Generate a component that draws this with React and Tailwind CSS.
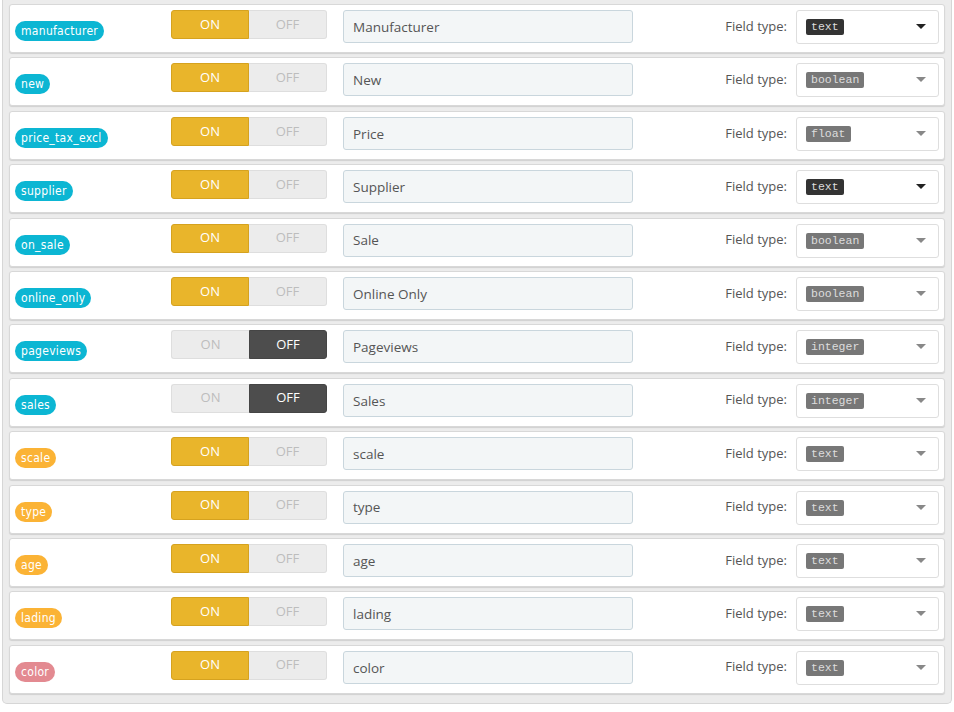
import React from "react";

const fields = [
  { key: "manufacturer", label: "Manufacturer", on: true, type: "text", active: true, tone: "info" },
  { key: "new", label: "New", on: true, type: "boolean", tone: "info" },
  { key: "price_tax_excl", label: "Price", on: true, type: "float", tone: "info" },
  { key: "supplier", label: "Supplier", on: true, type: "text", active: true, tone: "info" },
  { key: "on_sale", label: "Sale", on: true, type: "boolean", tone: "info" },
  { key: "online_only", label: "Online Only", on: true, type: "boolean", tone: "info" },
  { key: "pageviews", label: "Pageviews", on: false, type: "integer", tone: "info" },
  { key: "sales", label: "Sales", on: false, type: "integer", tone: "info" },
  { key: "scale", label: "scale", on: true, type: "text", tone: "warn" },
  { key: "type", label: "type", on: true, type: "text", tone: "warn" },
  { key: "age", label: "age", on: true, type: "text", tone: "warn" },
  { key: "lading", label: "lading", on: true, type: "text", tone: "warn" },
  { key: "color", label: "color", on: true, type: "text", tone: "danger" },
];

const badgeTone = {
  info: "bg-[#0cb6d3]",
  warn: "bg-[#fbb335]",
  danger: "bg-[#e38a91]",
};

function Toggle({ on }) {
  return (
    <div className="flex h-[29px] w-[156px] text-[13px] font-['Open_Sans',sans-serif]">
      <div
        className={
          on
            ? "flex w-[78px] items-center justify-center rounded-l-[3px] border border-[#d5a21f] bg-[#e9b52b] text-white"
            : "flex w-[78px] items-center justify-center rounded-l-[3px] border border-r-0 border-[#dedede] bg-[#ececec] text-[#bdbdbd]"
        }
      >
        ON
      </div>
      <div
        className={
          on
            ? "flex w-[78px] items-center justify-center rounded-r-[3px] border border-l-0 border-[#dedede] bg-[#ececec] text-[#bdbdbd]"
            : "flex w-[78px] items-center justify-center rounded-r-[3px] border border-[#454545] bg-[#4d4d4d] text-white"
        }
      >
        OFF
      </div>
    </div>
  );
}

function Row({ field }) {
  return (
    <div className="flex h-[49px] items-start rounded-[3px] border border-[#d8d8d8] bg-white pl-[5px] pr-[5px] pt-[5px] shadow-[0_1px_1px_rgba(0,0,0,0.12)]">
      <div className="w-[156px] pt-[7px]">
        <span
          className={`inline-flex h-[20px] items-center rounded-full px-[6px] text-[12px] tracking-[0.3px] text-white font-['DejaVu_Sans_Condensed','DejaVu_Sans',sans-serif] ${badgeTone[field.tone]}`}
        >
          {field.key}
        </span>
      </div>
      <Toggle on={field.on} />
      <div className="ml-[16px] flex h-[33px] w-[290px] items-center rounded-[3px] border border-[#c9d6dd] bg-[#f3f6f7] px-[9px] pt-[1px] text-[13.5px] text-[#555] font-['Open_Sans',sans-serif]">
        {field.label}
      </div>
      <div className="flex h-[33px] flex-1 items-center justify-end pr-[9px] text-[13px] text-[#555] font-['Open_Sans',sans-serif]">
        Field type:
      </div>
      <div className="flex h-[34px] w-[143px] items-center justify-between rounded-[3px] border border-[#dedede] bg-white pl-[9px] pr-[12px]">
        <span
          className={
            field.active
              ? "rounded-[2px] bg-[#333] px-[5px] py-[1px] text-[11.5px] leading-[14px] text-[#ddd] font-['Liberation_Mono',monospace]"
              : "rounded-[2px] bg-[#777] px-[5px] py-[1px] text-[11.5px] leading-[14px] text-[#ddd] font-['Liberation_Mono',monospace]"
          }
        >
          {field.type}
        </span>
        <svg width="10" height="6" viewBox="0 0 10 6">
          <path d="M0 0h10L5 5z" fill={field.active ? "#222" : "#888"} />
        </svg>
      </div>
    </div>
  );
}

export default function App() {
  return (
    <div className="h-[712px] w-[954px] bg-white">
      <div className="mx-[2px] flex flex-col gap-[4.4px] rounded-b-[5px] border-x border-b border-[#d6d6d6] bg-[#ececec] px-[6px] pb-[9px] pt-[4px]">
        {fields.map((f) => (
          <Row key={f.key} field={f} />
        ))}
      </div>
    </div>
  );
}
